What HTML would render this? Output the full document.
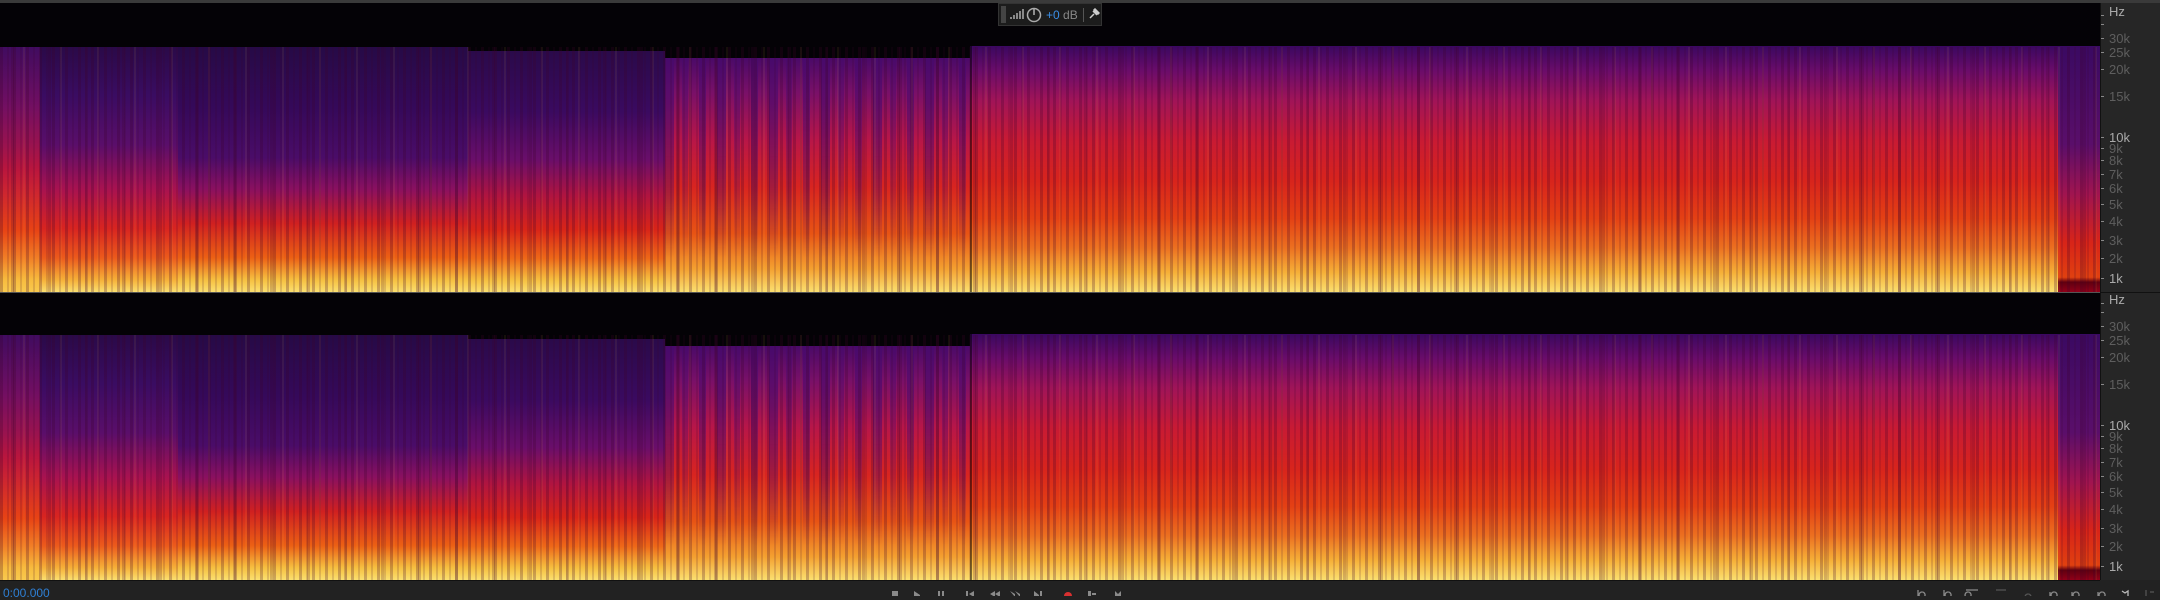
<!DOCTYPE html>
<html><head><meta charset="utf-8"><style>
*{margin:0;padding:0;box-sizing:border-box}
body{width:2160px;height:596px;background:#222;position:relative;overflow:hidden;font-family:"Liberation Sans",sans-serif}
.ch{position:absolute;left:0;width:2100px;height:289px;background:#040206;overflow:hidden}
.s{position:absolute;bottom:0}
.tex{position:absolute;left:0;right:0;bottom:0;background:
repeating-linear-gradient(90deg,rgba(60,0,40,.25) 0 3px,transparent 3px 7px,rgba(60,0,40,.15) 7px 9px,transparent 9px 13px),
repeating-linear-gradient(90deg,transparent 0 11px,rgba(60,0,40,.2) 11px 14px,transparent 14px 23px,rgba(255,200,80,.07) 23px 25px,transparent 25px 37px);
}
.st{position:absolute;inset:0;background:repeating-linear-gradient(90deg,rgba(70,10,110,.6) 0 9px,transparent 9px 17px,rgba(70,10,110,.4) 17px 23px,transparent 23px 34px,rgba(70,10,110,.55) 34px 41px,transparent 41px 52px);
-webkit-mask-image:linear-gradient(#000 20%,rgba(0,0,0,.6) 55%,transparent 85%);mask-image:linear-gradient(#000 20%,rgba(0,0,0,.6) 55%,transparent 85%)}
.ax{position:absolute;left:2100px;width:60px;height:289px;background:#262626;border-left:1px solid #111}
.ax span{position:absolute;left:8px;font-size:13px;color:#5e5e5e;line-height:13px}
.ax i{position:absolute;left:0;width:3px;height:1px;background:#888}
</style></head><body>
<div style="position:absolute;left:0;top:0;width:2160px;height:3px;background:#3a3a3a"></div>

<div class="ch" style="top:3px">
 <div class="s" style="left:0;width:178px;top:44px;background:linear-gradient(#2a0a48,#3a0c62 20%,#5a0e6a 40%,#a81250 58%,#d82420 74%,#ec5a1c 86%,#f6b038 95%,#fbe070)"></div>
 <div class="s" style="left:0;width:40px;top:44px;background:linear-gradient(#4a0c6a,#8a1060 25%,#d01830 50%,#ee5010 75%,#f8c040 95%);opacity:.7"></div>
 <div class="s" style="left:178px;width:290px;top:44px;background:linear-gradient(#260a46,#35095a 25%,#4a0c68 45%,#8a1060 58%,#d02020 72%,#ec6014 86%,#f6c040 95%,#fbe070)"></div>
 <div class="s" style="left:468px;width:197px;top:48px;background:linear-gradient(#2a0a4a,#3a0a60 25%,#6a0e6a 45%,#b01440 60%,#d82418 74%,#ee6818 86%,#f6c040 95%,#fbe070)"></div>
 <div class="s" style="left:665px;width:305px;top:55px;background:linear-gradient(#4a0a68,#7a1068 15%,#b81648 35%,#d82420 55%,#e85414 75%,#f4a030 90%,#fbe070)"></div>
 <div class="s" style="left:665px;width:305px;top:55px"><div class="st"></div></div>
 <div class="s" style="left:970px;width:1090px;top:43px;background:linear-gradient(#3a0860,#6a0c6a 10%,#a01458 22%,#c81a34 38%,#d8241c 55%,#e44014 70%,#ec7020 82%,#f6b038 92%,#fbe070)"></div>
 <div class="s" style="left:2058px;width:42px;top:43px;background:linear-gradient(#3a0a62,#5a0e6a 40%,#a01450 60%,#d82418 80%,#e04010 94%,#600010 96%,#900018)"></div>
 <div class="tex" style="top:44px"></div>
 <div style="position:absolute;left:970px;top:43px;width:2px;bottom:0;background:rgba(0,0,0,.5)"></div>
</div>
<div style="position:absolute;left:0;top:292px;width:2100px;height:1px;background:#555"></div>
<div class="ch" style="top:293px;height:287px">
 <div class="s" style="left:0;width:178px;top:42px;background:linear-gradient(#2a0a48,#3a0c62 20%,#5a0e6a 40%,#a81250 58%,#d82420 74%,#ec5a1c 86%,#f6b038 95%,#fbe070)"></div>
 <div class="s" style="left:0;width:40px;top:42px;background:linear-gradient(#4a0c6a,#8a1060 25%,#d01830 50%,#ee5010 75%,#f8c040 95%);opacity:.7"></div>
 <div class="s" style="left:178px;width:290px;top:42px;background:linear-gradient(#260a46,#35095a 25%,#4a0c68 45%,#8a1060 58%,#d02020 72%,#ec6014 86%,#f6c040 95%,#fbe070)"></div>
 <div class="s" style="left:468px;width:197px;top:46px;background:linear-gradient(#2a0a4a,#3a0a60 25%,#6a0e6a 45%,#b01440 60%,#d82418 74%,#ee6818 86%,#f6c040 95%,#fbe070)"></div>
 <div class="s" style="left:665px;width:305px;top:53px;background:linear-gradient(#4a0a68,#7a1068 15%,#b81648 35%,#d82420 55%,#e85414 75%,#f4a030 90%,#fbe070)"></div>
 <div class="s" style="left:665px;width:305px;top:53px"><div class="st"></div></div>
 <div class="s" style="left:970px;width:1090px;top:41px;background:linear-gradient(#3a0860,#6a0c6a 10%,#a01458 22%,#c81a34 38%,#d8241c 55%,#e44014 70%,#ec7020 82%,#f6b038 92%,#fbe070)"></div>
 <div class="s" style="left:2058px;width:42px;top:41px;background:linear-gradient(#3a0a62,#5a0e6a 40%,#a01450 60%,#d82418 80%,#e04010 94%,#600010 96%,#900018)"></div>
 <div class="tex" style="top:42px"></div>
 <div style="position:absolute;left:970px;top:41px;width:2px;bottom:0;background:rgba(0,0,0,.5)"></div>
</div>
<div style="position:absolute;left:0;top:580px;width:2100px;height:1px;background:#111"></div>

<div class="ax" style="top:3px">
 <span style="top:2px;color:#aaa">Hz</span>
 <i style="top:12px"></i><i style="top:21px"></i>
 <span style="top:29px">30k</span><i style="top:35px"></i>
 <span style="top:43px">25k</span><i style="top:49px"></i>
 <span style="top:60px">20k</span><i style="top:66px"></i>
 <span style="top:87px">15k</span><i style="top:93px"></i>
 <span style="top:128px;color:#aaa">10k</span><i style="top:134px"></i>
 <span style="top:139px">9k</span><i style="top:145px"></i>
 <span style="top:151px">8k</span><i style="top:157px"></i>
 <span style="top:165px">7k</span><i style="top:171px"></i>
 <span style="top:179px">6k</span><i style="top:185px"></i>
 <span style="top:195px">5k</span><i style="top:201px"></i>
 <span style="top:212px">4k</span><i style="top:218px"></i>
 <span style="top:231px">3k</span><i style="top:237px"></i>
 <span style="top:249px">2k</span><i style="top:255px"></i>
 <span style="top:269px;color:#aaa">1k</span><i style="top:275px"></i>
</div>
<div style="position:absolute;left:2100px;top:292px;width:60px;height:1px;background:#111"></div>
<div class="ax" style="top:293px;height:287px">
 <span style="top:0px;color:#aaa">Hz</span>
 <i style="top:10px"></i><i style="top:19px"></i>
 <span style="top:27px">30k</span><i style="top:33px"></i>
 <span style="top:41px">25k</span><i style="top:47px"></i>
 <span style="top:58px">20k</span><i style="top:64px"></i>
 <span style="top:85px">15k</span><i style="top:91px"></i>
 <span style="top:126px;color:#aaa">10k</span><i style="top:132px"></i>
 <span style="top:137px">9k</span><i style="top:143px"></i>
 <span style="top:149px">8k</span><i style="top:155px"></i>
 <span style="top:163px">7k</span><i style="top:169px"></i>
 <span style="top:177px">6k</span><i style="top:183px"></i>
 <span style="top:193px">5k</span><i style="top:199px"></i>
 <span style="top:210px">4k</span><i style="top:216px"></i>
 <span style="top:229px">3k</span><i style="top:235px"></i>
 <span style="top:247px">2k</span><i style="top:253px"></i>
 <span style="top:267px;color:#aaa">1k</span><i style="top:273px"></i>
</div>

<div style="position:absolute;left:998px;top:3px;width:104px;height:23px;background:#1c1c1c;border:1px solid #333">
 <div style="position:absolute;left:2px;top:2px;width:5px;height:17px;background:#444"></div>
 <svg style="position:absolute;left:10px;top:4px" width="16" height="12"><path d="M1 11h2v-2h-2zM4 11h2v-4h-2zM7 11h2v-6h-2zM10 11h2v-8h-2zM13 11h2v-10h-2z" fill="#888"/></svg>
 <svg style="position:absolute;left:26px;top:1px" width="18" height="18"><circle cx="9" cy="10" r="6.5" fill="none" stroke="#aaa" stroke-width="1.5"/><path d="M9 3v7" stroke="#aaa" stroke-width="1.6"/></svg>
 <span style="position:absolute;left:47px;top:4px;font-size:12px;color:#3a8ee6">+0 <span style="color:#888">dB</span></span>
 <div style="position:absolute;left:84px;top:4px;width:1px;height:14px;background:#555"></div>
 <svg style="position:absolute;left:89px;top:4px" width="12" height="12"><path d="M2 10l4-4M5 3l4 4M6 2l4 4 1-1-4-4z" stroke="#ccc" stroke-width="1.5" fill="#ccc"/></svg>
</div>

<div style="position:absolute;left:3px;top:587px;font-size:12px;color:#2e7fd4;line-height:12px">0:00.000</div>
<svg style="position:absolute;left:880px;top:588px" width="250" height="8" fill="#8a8a8a">
 <rect x="12" y="3" width="6" height="6"/>
 <path d="M34 3l6 4v2h-6z"/>
 <rect x="58" y="3" width="2" height="6"/><rect x="62" y="3" width="2" height="6"/>
 <rect x="86" y="3" width="2" height="6"/><path d="M89 6l5-3v6z"/>
 <path d="M110 6l5-3v6zM115 6l5-3v6z"/>
 <path d="M130 3l5 3v3zM135 3l5 3v3z"/>
 <path d="M154 3l5 4v2h-5z"/><rect x="160" y="3" width="2" height="6"/>
 <circle cx="188" cy="8" r="4" fill="#d83030"/>
 <path d="M208 3h3v6h-3zM212 5h4v2h-4z"/>
 <path d="M235 3l3 3 3-3v6h-6z"/>
</svg>
<svg style="position:absolute;left:1900px;top:588px" width="260" height="8" fill="none" stroke="#8a8a8a" stroke-width="1.3">
 <path d="M18 2v6M22 4a3 3 0 1 0 0.1 0"/>
 <path d="M44 2v6M48 4a3 3 0 1 0 0.1 0"/>
 <path d="M66 2h12M68 4a3 3 0 1 0 0.1 0"/>
 <path d="M96 2h10" stroke="#555"/>
 <path d="M128 6a3 3 0 1 0 0.1 0" stroke="#555"/>
 <path d="M150 4v4M154 4a3 3 0 1 0 0.1 0"/>
 <path d="M172 4v4M176 4a3 3 0 1 0 0.1 0"/>
 <path d="M198 4v4M202 4a3 3 0 1 0 0.1 0"/>
 <path d="M222 3l3 2 3-2v5" stroke="#bbb"/>
 <path d="M246 2v6M250 4h4" stroke="#555"/>
</svg>
</body></html>
